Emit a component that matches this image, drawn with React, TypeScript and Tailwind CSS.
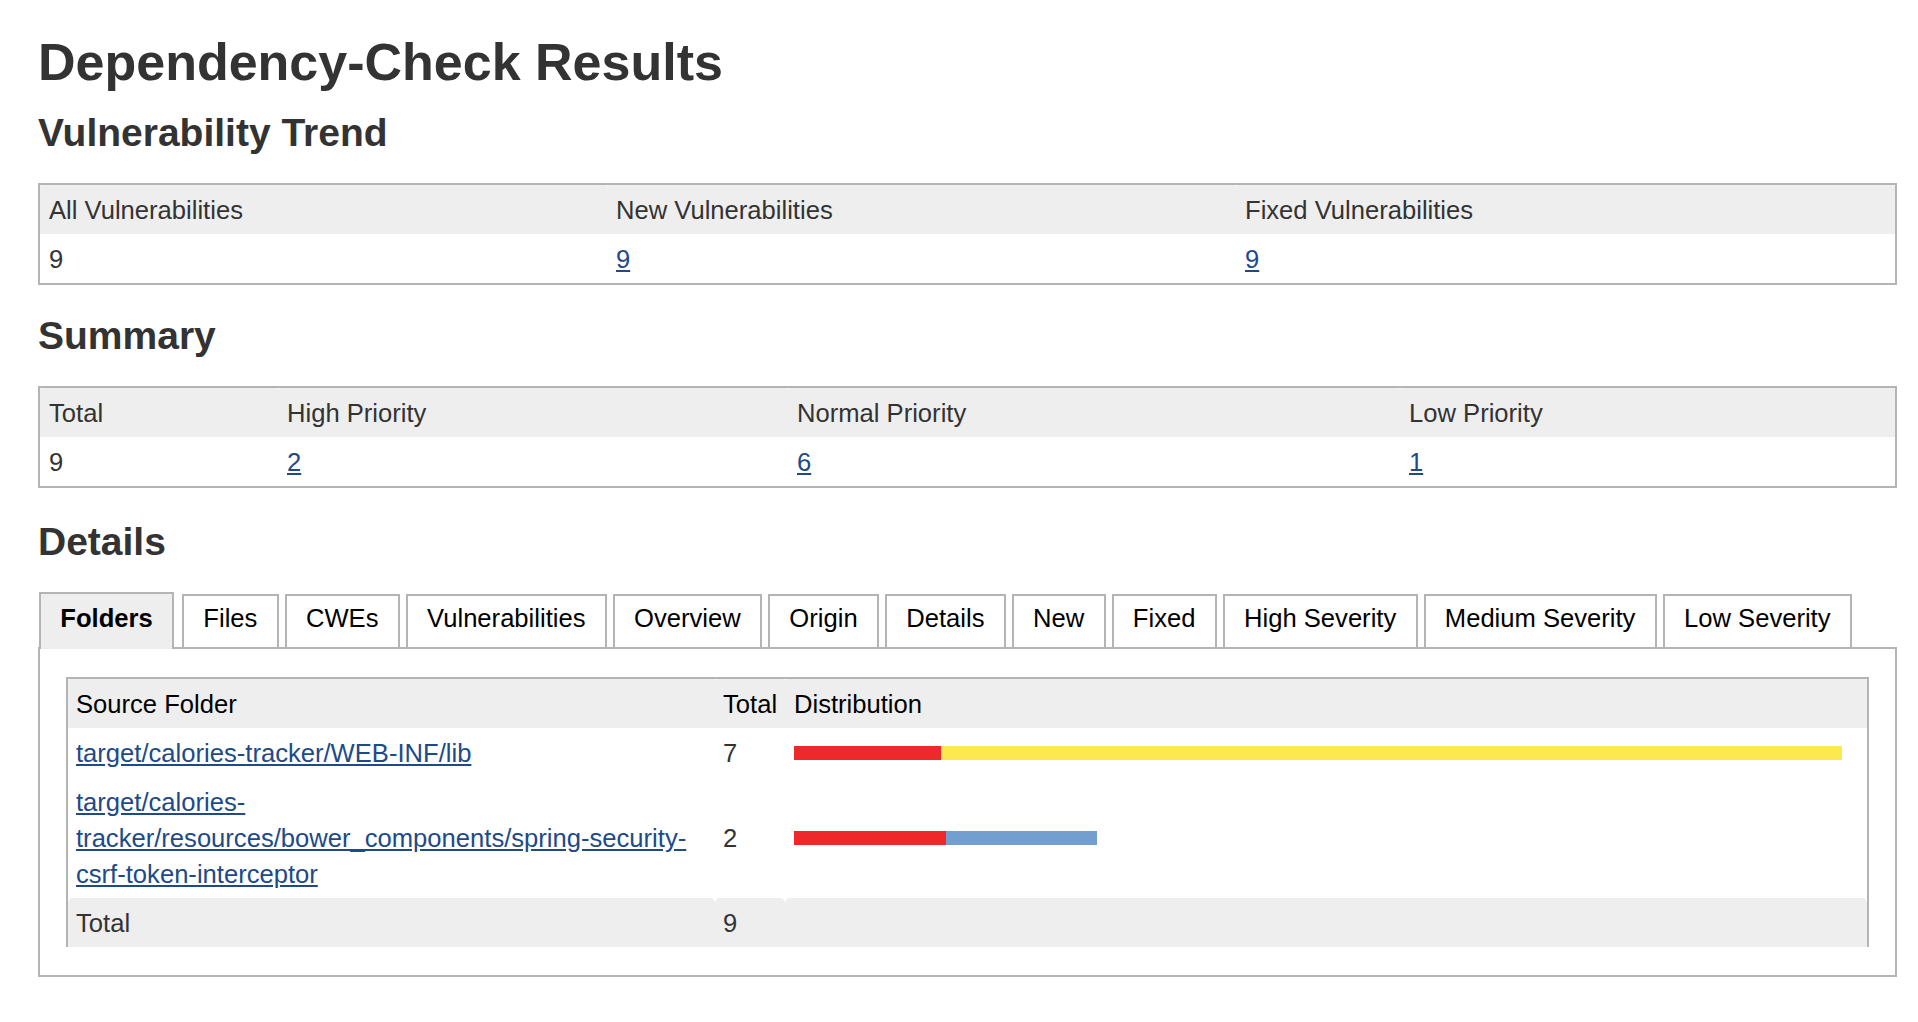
import React from "react";

type Cell = { value: string; link?: boolean };

const tabs = [
  "Folders",
  "Files",
  "CWEs",
  "Vulnerabilities",
  "Overview",
  "Origin",
  "Details",
  "New",
  "Fixed",
  "High Severity",
  "Medium Severity",
  "Low Severity",
];

function ValueCell({ cell }: { cell: Cell }) {
  return (
    <td className="px-[9px] py-[6.5px] text-left leading-[36px]">
      {cell.link ? (
        <a href="#" className="text-[#204a87] underline">
          {cell.value}
        </a>
      ) : (
        cell.value
      )}
    </td>
  );
}

function TrendTable() {
  const heads = ["All Vulnerabilities", "New Vulnerabilities", "Fixed Vulnerabilities"];
  const values: Cell[] = [{ value: "9" }, { value: "9", link: true }, { value: "9", link: true }];
  return (
    <div className="mt-[27px] border-2 border-[#b4b4b4]">
      <table className="w-full table-fixed border-separate border-spacing-0">
        <colgroup>
          <col className="w-[567px]" />
          <col className="w-[629px]" />
          <col className="w-[659px]" />
        </colgroup>
        <thead>
          <tr>
            {heads.map((h) => (
              <th key={h} className="rounded-t-[2px] bg-[#eee] px-[9px] py-[6.5px] text-left font-normal leading-[36px]">
                {h}
              </th>
            ))}
          </tr>
        </thead>
        <tbody>
          <tr>
            {values.map((v, i) => (
              <ValueCell key={i} cell={v} />
            ))}
          </tr>
        </tbody>
      </table>
    </div>
  );
}

function SummaryTable() {
  const heads = ["Total", "High Priority", "Normal Priority", "Low Priority"];
  const values: Cell[] = [
    { value: "9" },
    { value: "2", link: true },
    { value: "6", link: true },
    { value: "1", link: true },
  ];
  return (
    <div className="mt-[27px] border-2 border-[#b4b4b4]">
      <table className="w-full table-fixed border-separate border-spacing-0">
        <colgroup>
          <col className="w-[238px]" />
          <col className="w-[510px]" />
          <col className="w-[612px]" />
          <col className="w-[495px]" />
        </colgroup>
        <thead>
          <tr>
            {heads.map((h) => (
              <th key={h} className="rounded-t-[2px] bg-[#eee] px-[9px] py-[6.5px] text-left font-normal leading-[36px]">
                {h}
              </th>
            ))}
          </tr>
        </thead>
        <tbody>
          <tr>
            {values.map((v, i) => (
              <ValueCell key={i} cell={v} />
            ))}
          </tr>
        </tbody>
      </table>
    </div>
  );
}

function FoldersTable() {
  return (
    <div className="border-x-2 border-t-2 border-[#b4b4b4]">
      <table className="w-full table-fixed border-separate border-spacing-0">
        <colgroup>
          <col className="w-[647px]" />
          <col className="w-[70px]" />
          <col className="w-[1082px]" />
        </colgroup>
        <thead>
          <tr className="text-black">
            <th className="rounded-t-[2px] bg-[#eee] px-[8px] py-[6.5px] text-left font-normal leading-[36px]">Source Folder</th>
            <th className="rounded-t-[2px] bg-[#eee] px-[8px] py-[6.5px] text-left font-normal leading-[36px]">Total</th>
            <th className="rounded-t-[2px] bg-[#eee] px-[9px] py-[6.5px] text-left font-normal leading-[36px]">Distribution</th>
          </tr>
        </thead>
        <tbody>
          <tr>
            <td className="px-[8px] py-[6.5px] leading-[36px]">
              <a href="#" className="text-[#204a87] underline">
                target/calories-tracker/WEB-INF/lib
              </a>
            </td>
            <td className="px-[8px] py-[6.5px] leading-[36px]">7</td>
            <td className="px-[9px] py-[6.5px] leading-[36px]">
              <div className="flex h-[14px]">
                <div className="w-[147px] bg-[#ef2929]" />
                <div className="w-[901px] bg-[#fce94f]" />
              </div>
            </td>
          </tr>
          <tr>
            <td className="px-[8px] py-[6.5px] leading-[36px]">
              <a href="#" className="text-[#204a87] underline">
                target/calories-tracker/resources/bower_components/spring-security-csrf-token-interceptor
              </a>
            </td>
            <td className="px-[8px] py-[6.5px] leading-[36px]">2</td>
            <td className="px-[9px] py-[6.5px] leading-[36px]">
              <div className="flex h-[14px]">
                <div className="w-[152px] bg-[#ef2929]" />
                <div className="w-[151px] bg-[#729fcf]" />
              </div>
            </td>
          </tr>
        </tbody>
        <tfoot>
          <tr>
            <td className="rounded-t-[5px] bg-[#eee] px-[8px] py-[6.5px] leading-[36px]">Total</td>
            <td className="rounded-t-[5px] bg-[#eee] px-[8px] py-[6.5px] leading-[36px]">9</td>
            <td className="rounded-t-[5px] bg-[#eee] px-[9px] py-[6.5px] leading-[36px]" />
          </tr>
        </tfoot>
      </table>
    </div>
  );
}

export default function App() {
  return (
    <div className="min-h-screen bg-white pl-[38px] pt-[32px] font-['Liberation_Sans',Arial,Helvetica,sans-serif] text-[25.6px] text-[#333]">
      <div className="w-[1859px]">
        <h1 className="text-[52px] font-bold leading-[60px]">Dependency-Check Results</h1>

        <h2 className="mt-[18px] text-[39px] font-bold leading-[46px]">Vulnerability Trend</h2>
        <TrendTable />

        <h2 className="mt-[28px] text-[39px] font-bold leading-[46px]">Summary</h2>
        <SummaryTable />

        <h2 className="mt-[31px] text-[39px] font-bold leading-[46px]">Details</h2>

        <div className="mt-[27px] flex items-end pl-[1px]">
          {tabs.map((t, i) =>
            i === 0 ? (
              <div
                key={t}
                className="relative z-10 -mb-[2px] mr-[8px] h-[57px] border-2 border-b-0 border-[#b4b4b4] bg-[#eee] px-[19.3px] pt-[6px] font-bold leading-[36px] text-black"
              >
                {t}
              </div>
            ) : (
              <div
                key={t}
                className="mr-[6px] h-[53px] border-2 border-b-0 border-[#b4b4b4] bg-white px-[19.3px] pt-[4px] leading-[36px] whitespace-nowrap text-black"
              >
                {t}
              </div>
            )
          )}
        </div>
        <div className="border-2 border-[#b4b4b4] px-[26px] pt-[28px] pb-[28px]">
          <FoldersTable />
        </div>
      </div>
    </div>
  );
}
